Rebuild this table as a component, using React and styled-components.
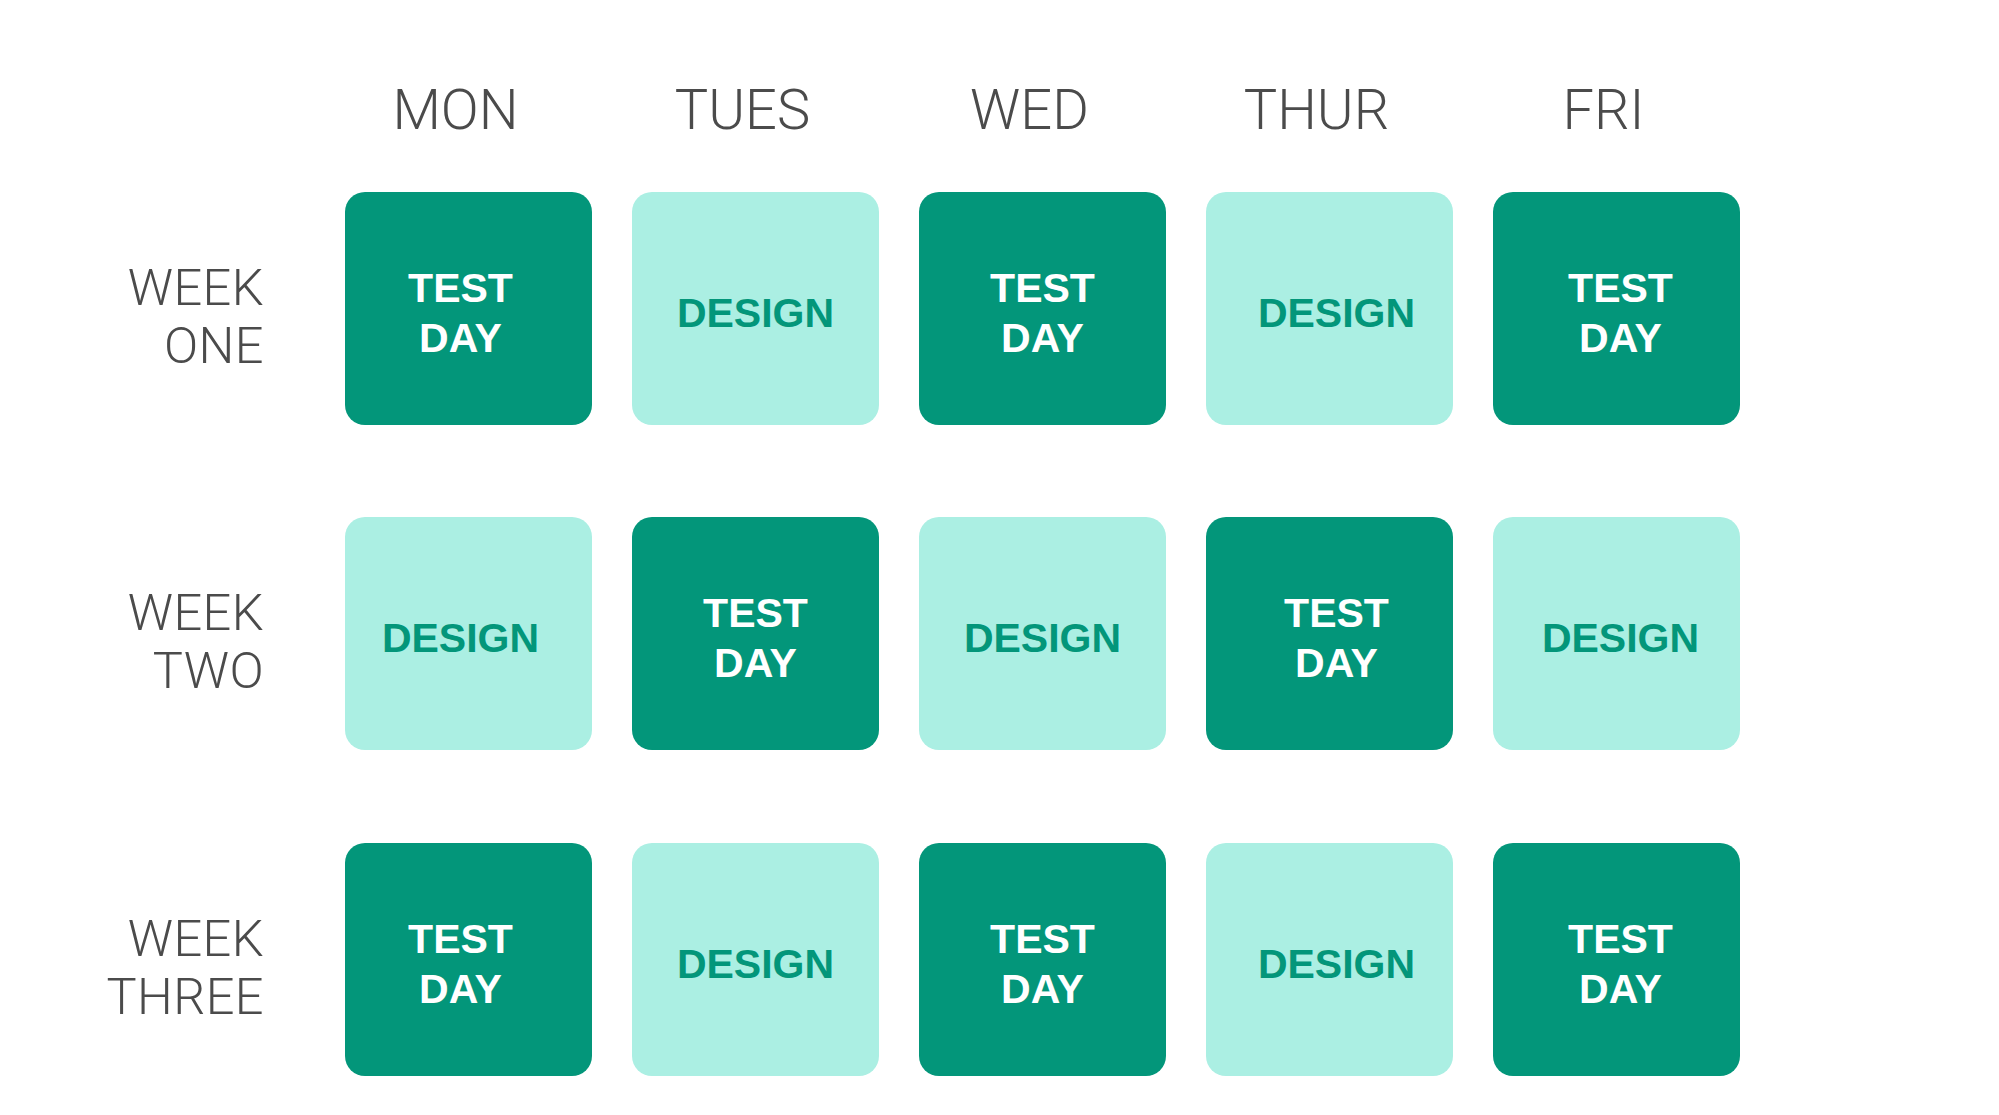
import React from 'react';
import styled, { createGlobalStyle } from 'styled-components';

const GlobalStyle = createGlobalStyle`
  html, body {
    margin: 0;
    padding: 0;
    background: #ffffff;
  }
  body {
    font-family: 'Roboto', 'Liberation Sans', sans-serif;
  }
`;

const Page = styled.div`
  width: 1999px;
  height: 1115px;
  padding-top: 82px;
  box-sizing: border-box;
  background: #ffffff;
  overflow: hidden;
`;

const Grid = styled.div`
  display: grid;
  grid-template-columns: 305px repeat(5, 247px);
  column-gap: 40px;
`;

const HeaderRow = styled(Grid)`
  height: 56px;
  margin-bottom: 54px;
`;

const DayLabel = styled.div`
  grid-column: ${p => p.$col};
  font-family: 'Roboto', 'Liberation Sans', sans-serif;
  font-weight: 300;
  font-size: 56px;
  line-height: 56px;
  color: #4b4b4b;
  text-align: center;
  padding-right: 26px;
  white-space: nowrap;
`;

const WeekRow = styled(Grid)`
  height: 233px;
  margin-bottom: ${p => p.$gap}px;
`;

const WeekLabel = styled.div`
  align-self: center;
  padding-top: 16px;
  padding-right: 41px;
  text-align: right;
  font-family: 'Roboto', 'Liberation Sans', sans-serif;
  font-weight: 300;
  font-size: 50.5px;
  line-height: 58px;
  letter-spacing: 0.4px;
  color: #4b4b4b;
`;

const Tile = styled.div`
  display: flex;
  align-items: center;
  justify-content: center;
  border-radius: 20px;
  background: ${p => (p.$kind === 'test' ? '#03967a' : '#abefe3')};
`;

const TileText = styled.div`
  padding-top: 8px;
  transform: translateX(${p => p.$shift}px);
  font-family: 'Liberation Sans', Arial, sans-serif;
  font-weight: 700;
  font-size: 41px;
  line-height: 50px;
  text-align: center;
  color: ${p => (p.$kind === 'test' ? '#ffffff' : '#03967a')};
`;

const days = [
  { name: 'MON', shift: -8 },
  { name: 'TUES', shift: 0 },
  { name: 'WED', shift: 0 },
  { name: 'THUR', shift: 7 },
  { name: 'FRI', shift: 4 },
];

const weeks = [
  { label: ['WEEK', 'ONE'], start: 'test', gap: 92 },
  { label: ['WEEK', 'TWO'], start: 'design', gap: 93 },
  { label: ['WEEK', 'THREE'], start: 'test', gap: 0 },
];

const kindFor = (start, i) => {
  const even = i % 2 === 0;
  if (start === 'test') return even ? 'test' : 'design';
  return even ? 'design' : 'test';
};

const App = () => {
  return (
    <Page>
      <GlobalStyle />
      <HeaderRow>
        {days.map((d, i) => (
          <DayLabel key={d.name} $col={i + 2}>{d.name}</DayLabel>
        ))}
      </HeaderRow>
      {weeks.map(week => (
        <WeekRow key={week.label[1]} $gap={week.gap}>
          <WeekLabel>
            {week.label[0]}
            <br />
            {week.label[1]}
          </WeekLabel>
          {days.map((d, i) => {
            const kind = kindFor(week.start, i);
            return (
              <Tile key={d.name} $kind={kind}>
                <TileText $kind={kind} $shift={d.shift}>
                  {kind === 'test' ? (
                    <>
                      TEST
                      <br />
                      DAY
                    </>
                  ) : (
                    'DESIGN'
                  )}
                </TileText>
              </Tile>
            );
          })}
        </WeekRow>
      ))}
    </Page>
  );
};

export default App;
